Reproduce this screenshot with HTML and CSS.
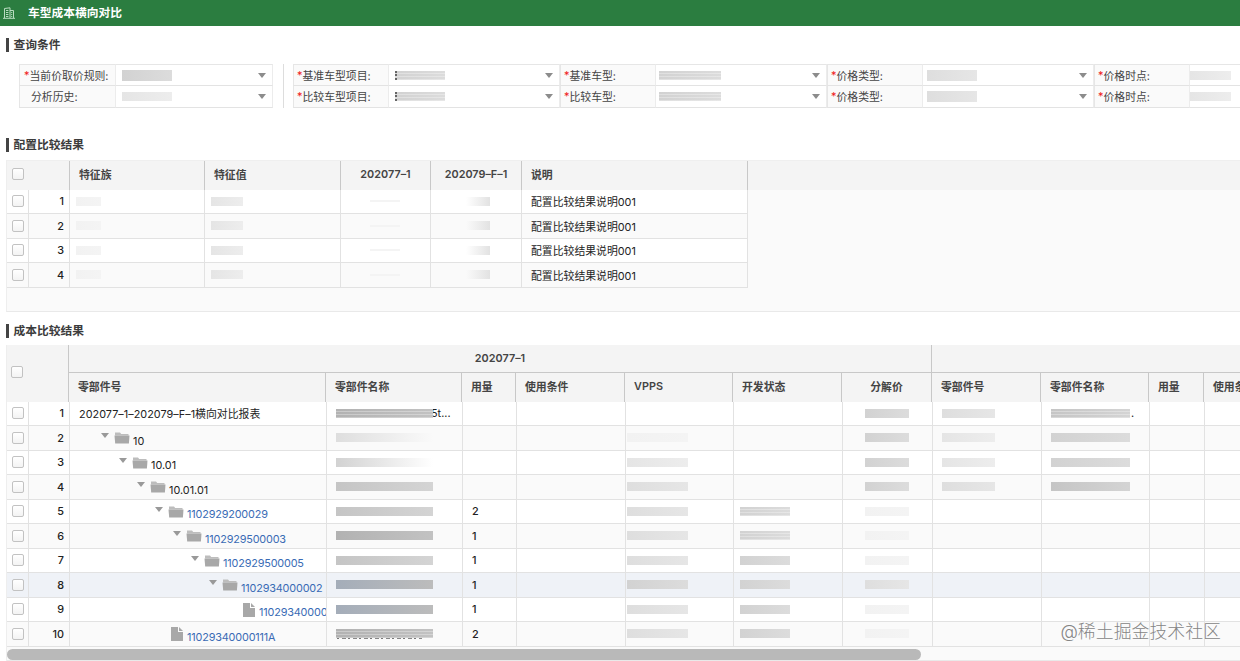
FILE: index.html
```html
<!DOCTYPE html>
<html lang="zh-CN">
<head>
    <meta charset="UTF-8">
    <title>车型成本横向对比</title>
    <link rel="stylesheet" href="styles.css">
</head>
<body>
    <svg class="sprite" width="0" height="0">
        <symbol id="folder" viewBox="0 0 15 12">
            <path d="M.5 3V.6h5L6.7 2H14v1.6H.5z" fill="#bdbdbd"/>
            <path d="M0 3.6h15L14.4 11.6H.7z" fill="#a8a8a8"/>
        </symbol>
        <symbol id="file" viewBox="0 0 12 14">
            <path d="M0 0h7v5h5v9H0z" fill="#a8a8a8"/>
            <path d="M8 0l4 4H8z" fill="#a8a8a8"/>
        </symbol>
    </svg>

    <header class="topbar">
        <svg class="logo" viewBox="0 0 12 12" fill="none" stroke="#b9dcc1" stroke-width="1">
            <path d="M1.5 11V1.5L7 .8V11M7 3.5h3.5V11M0 11.3h12M3 3.5h2.4M3 5.5h2.4M3 7.5h2.4M3 9.5h2.4M8.7 5v1M8.7 7v1M8.7 9v1"/>
        </svg>
        <h1>车型成本横向对比</h1>
    </header>

    <main>
        <h2>查询条件</h2>
        <div class="query">
            <div class="form base">
                <div class="label"><i>*</i>当前价取价规则:</div><div class="select"><span class="mask w50 t4 tall"></span></div>
                <div class="label plain">分析历史:</div><div class="select"><span class="mask w50 t2"></span></div>
            </div>
            <div class="form compare">
                <div class="label"><i>*</i>基准车型项目:</div><div class="select"><span class="mask w50 t4 cut stripes"></span></div>
                <div class="label"><i>*</i>基准车型:</div><div class="select near"><span class="mask w62 t4 stripes"></span></div>
                <div class="label"><i>*</i>价格类型:</div><div class="select type"><span class="mask w50 t3 tall"></span></div>
                <div class="label"><i>*</i>价格时点:</div><div class="select edge"><span class="mask w41 t2"></span></div>
                <div class="label"><i>*</i>比较车型项目:</div><div class="select"><span class="mask w50 t4 cut stripes"></span></div>
                <div class="label"><i>*</i>比较车型:</div><div class="select near"><span class="mask w62 t4 stripes"></span></div>
                <div class="label"><i>*</i>价格类型:</div><div class="select type"><span class="mask w50 t3 tall"></span></div>
                <div class="label"><i>*</i>价格时点:</div><div class="select edge"><span class="mask w41 t2"></span></div>
            </div>
        </div>

        <h2>配置比较结果</h2>
        <div class="grid config">
            <div class="head row">
                <div class="pick"><b class="check"></b></div>
                <div>特征族</div><div>特征值</div><div class="center">202077–1</div><div class="center">202079–F–1</div><div>说明</div>
            </div>
            <div class="row">
                <div class="pick"><b class="check"></b></div><div class="num">1</div>
                <div><span class="mask w25 t1"></span></div><div><span class="mask w32 t2"></span></div>
                <div class="mid"><span class="mask line"></span></div><div class="mid"><span class="mask fade"></span></div><div>配置比较结果说明001</div>
            </div>
            <div class="row">
                <div class="pick"><b class="check"></b></div><div class="num">2</div>
                <div><span class="mask w25 t1"></span></div><div><span class="mask w32 t2"></span></div>
                <div class="mid"><span class="mask line"></span></div><div class="mid"><span class="mask fade"></span></div><div>配置比较结果说明001</div>
            </div>
            <div class="row">
                <div class="pick"><b class="check"></b></div><div class="num">3</div>
                <div><span class="mask w25 t1"></span></div><div><span class="mask w32 t2"></span></div>
                <div class="mid"><span class="mask line"></span></div><div class="mid"><span class="mask fade"></span></div><div>配置比较结果说明001</div>
            </div>
            <div class="row">
                <div class="pick"><b class="check"></b></div><div class="num">4</div>
                <div><span class="mask w25 t1"></span></div><div><span class="mask w32 t2"></span></div>
                <div class="mid"><span class="mask line"></span></div><div class="mid"><span class="mask fade"></span></div><div>配置比较结果说明001</div>
            </div>
        </div>

        <h2>成本比较结果</h2>
        <div class="grid cost">
            <div class="head row">
                <div class="pick"><b class="check"></b></div>
                <div class="group">202077–1</div><div class="group"></div>
                <div>零部件号</div><div>零部件名称</div><div>用量</div><div>使用条件</div><div>VPPS</div><div>开发状态</div><div class="center">分解价</div>
                <div>零部件号</div><div>零部件名称</div><div>用量</div><div>使用条件</div>
            </div>
            <div class="row">
                <div class="pick"><b class="check"></b></div><div class="num">1</div>
                <div class="report">202077–1–202079–F–1横向对比报表</div>
                <div><span class="mask w96 t6 stripes"></span><span class="tail">5t...</span></div><div></div><div></div><div></div><div></div>
                <div class="price"><span class="mask w44 t4"></span></div>
                <div><span class="mask w52 t3"></span></div><div><span class="mask w78 t5 stripes"></span><span class="dot">.</span></div><div></div><div></div>
            </div>
            <div class="row">
                <div class="pick"><b class="check"></b></div><div class="num">2</div>
                <div class="tree lv0"><b class="arrow"></b><svg class="folder"><use href="#folder"/></svg>10</div>
                <div><span class="mask w96 t3 out"></span></div><div></div><div></div>
                <div class="vpps"><span class="mask w61 t1"></span></div><div></div>
                <div class="price"><span class="mask w44 t4"></span></div>
                <div><span class="mask w52 t2"></span></div><div><span class="mask w78 t4"></span></div><div></div><div></div>
            </div>
            <div class="row">
                <div class="pick"><b class="check"></b></div><div class="num">3</div>
                <div class="tree lv1"><b class="arrow"></b><svg class="folder"><use href="#folder"/></svg>10.01</div>
                <div><span class="mask w96 t4 out"></span></div><div></div><div></div>
                <div class="vpps"><span class="mask w61 t2"></span></div><div></div>
                <div class="price"><span class="mask w44 t4"></span></div>
                <div><span class="mask w52 t2"></span></div><div><span class="mask w78 t4"></span></div><div></div><div></div>
            </div>
            <div class="row">
                <div class="pick"><b class="check"></b></div><div class="num">4</div>
                <div class="tree lv2"><b class="arrow"></b><svg class="folder"><use href="#folder"/></svg>10.01.01</div>
                <div><span class="mask w96 t5"></span></div><div></div><div></div>
                <div class="vpps"><span class="mask w61 t3"></span></div><div></div>
                <div class="price"><span class="mask w44 t4"></span></div>
                <div><span class="mask w52 t3"></span></div><div><span class="mask w78 t5"></span></div><div></div><div></div>
            </div>
            <div class="row">
                <div class="pick"><b class="check"></b></div><div class="num">5</div>
                <div class="tree lv3"><b class="arrow"></b><svg class="folder"><use href="#folder"/></svg><a>1102929200029</a></div>
                <div><span class="mask w96 t5"></span></div><div class="qty">2</div><div></div>
                <div class="vpps"><span class="mask w61 t3"></span></div><div class="state"><span class="mask w50 t4 stripes"></span></div>
                <div class="price"><span class="mask w44 t1"></span></div>
                <div></div><div></div><div></div><div></div>
            </div>
            <div class="row">
                <div class="pick"><b class="check"></b></div><div class="num">6</div>
                <div class="tree lv4"><b class="arrow"></b><svg class="folder"><use href="#folder"/></svg><a>1102929500003</a></div>
                <div><span class="mask w96 t6"></span></div><div class="qty">1</div><div></div>
                <div class="vpps"><span class="mask w61 t3"></span></div><div class="state"><span class="mask w50 t4 stripes"></span></div>
                <div class="price"><span class="mask w44 t1"></span></div>
                <div></div><div></div><div></div><div></div>
            </div>
            <div class="row">
                <div class="pick"><b class="check"></b></div><div class="num">7</div>
                <div class="tree lv5"><b class="arrow"></b><svg class="folder"><use href="#folder"/></svg><a>1102929500005</a></div>
                <div><span class="mask w96 t5"></span></div><div class="qty">1</div><div></div>
                <div class="vpps"><span class="mask w61 t3"></span></div><div class="state"><span class="mask w50 t4"></span></div>
                <div class="price"><span class="mask w44 t1"></span></div>
                <div></div><div></div><div></div><div></div>
            </div>
            <div class="row active">
                <div class="pick"><b class="check"></b></div><div class="num">8</div>
                <div class="tree lv6"><b class="arrow"></b><svg class="folder"><use href="#folder"/></svg><a>1102934000002</a></div>
                <div><span class="mask w96 t6 blue"></span></div><div class="qty">1</div><div></div>
                <div class="vpps"><span class="mask w61 t4"></span></div><div class="state"><span class="mask w50 t4"></span></div>
                <div class="price"><span class="mask w44 t3"></span></div>
                <div></div><div></div><div></div><div></div>
            </div>
            <div class="row">
                <div class="pick"><b class="check"></b></div><div class="num">9</div>
                <div class="tree lv7"><b class="leaf"></b><svg class="file"><use href="#file"/></svg><a>11029340000</a></div>
                <div><span class="mask w96 t6 blue"></span></div><div class="qty">1</div><div></div>
                <div class="vpps"><span class="mask w61 t3"></span></div><div class="state"><span class="mask w50 t4"></span></div>
                <div class="price"><span class="mask w44 t1"></span></div>
                <div></div><div></div><div></div><div></div>
            </div>
            <div class="row">
                <div class="pick"><b class="check"></b></div><div class="num">10</div>
                <div class="tree lv3"><b class="leaf"></b><svg class="file"><use href="#file"/></svg><a>11029340000111A</a></div>
                <div><span class="mask w96 t6 stripes ragged"></span></div><div class="qty">2</div><div></div>
                <div class="vpps"><span class="mask w61 t3"></span></div><div class="state"><span class="mask w50 t4"></span></div>
                <div class="price"><span class="mask w44 t1"></span></div>
                <div></div><div></div><div></div><div></div>
            </div>
            <div class="scroll"><div class="thumb"></div></div>
        </div>
    </main>
    <div class="watermark">@稀土掘金技术社区</div>
</body>
</html>
```
FILE: styles.css
```css
* {
    box-sizing: border-box;
}
body {
    margin: 0;
    height: 661px;
    overflow: hidden;
    background: #fff;
    color: #222;
    font-family: Inter, "Noto Sans CJK SC", sans-serif;
    font-size: 10.85px;
}
.sprite {
    display: block;
    height: 0;
}
.topbar {
    display: flex;
    align-items: center;
    height: 26px;
    padding-left: 3px;
    background: #2b7d40;
}
.logo {
    width: 12px;
    height: 12px;
    margin: -1px 13px 0 0;
}
h1 {
    margin: 0;
    color: #fff;
    font-size: 11.75px;
    line-height: 26px;
}
h2 {
    display: flex;
    align-items: center;
    height: 14px;
    margin: 0 0 0 6px;
    padding-left: 4.5px;
    border-left: 3px solid #444;
    color: #3c3c3c;
    font-size: 11.75px;
    font-weight: 600;
    line-height: 14px;
}
main {
    padding-top: 12px;
}

/* query form */
.query {
    display: flex;
    height: 44px;
    margin: 12px 0 30px 19px;
}
.form {
    display: grid;
    grid-template-rows: 22px 22px;
    flex: none;
}
.base {
    grid-template-columns: 97px 157px;
    margin-right: 10px;
}
.compare {
    grid-template-columns: repeat(4, 96px 171px);
    padding-left: 9px;
    border-left: 1px solid #ddd;
}
.label, .select {
    display: flex;
    align-items: center;
    padding-bottom: 1px;
    border-bottom: 1px solid #e3e3e3;
    border-right: 1px solid #ececec;
}
.base > :nth-child(-n+2),
.compare > :nth-child(-n+8) {
    border-top: 1px solid #e6e6e6;
}
.label {
    padding-left: 4px;
    border-left: 1px solid #e6e6e6;
    background: #fafafa;
    color: #444;
    white-space: nowrap;
}
.compare .label {
    padding-left: 3px;
}
.label.plain {
    padding-left: 11px;
}
.label i {
    color: #f01818;
    font-style: normal;
}
.select {
    padding: 0 6px 0 6px;
    justify-content: space-between;
}
.select.near {
    padding-left: 3px;
}
.select.type {
    padding-left: 4px;
}
.select.edge {
    padding-left: 0;
}
.select::after {
    content: "";
    border: 4px solid transparent;
    border-top: 5px solid #8c8c8c;
    border-bottom: 0;
}

/* grids */
.grid {
    margin-left: 6px;
    border-left: 1px solid #eee;
    background: #fafafa;
    overflow: hidden;
}
.row {
    display: grid;
    height: 24.5px;
}
.row > div {
    display: flex;
    align-items: center;
    min-width: 0;
    padding-left: 9px;
    border-right: 1px solid #e2e2e2;
    border-bottom: 1px solid #e2e2e2;
    overflow: hidden;
    white-space: nowrap;
}
.row:nth-child(even) > div {
    background: #fff;
}
.row.active > div {
    background: #eff2f7;
}
.head.row > div {
    padding-bottom: 1px;
    background: #f4f4f4;
    border-color: #c8c8c8;
    color: #444;
    font-weight: 600;
}
.head.row > .pick {
    padding-left: 4px;
}
.head .center {
    justify-content: center;
    padding-left: 0;
}
.row > .pick {
    padding-left: 5px;
}
.row > .num {
    justify-content: flex-end;
    padding: 0 5px 0 0;
    font-weight: 500;
}
.row > .qty {
    font-weight: 500;
}
.check {
    flex: none;
    width: 12px;
    height: 12px;
    border: 1px solid #c2c2c2;
    border-radius: 2px;
    background: linear-gradient(#fff, #f3f3f3);
}

.config {
    height: 152px;
    margin-top: 8px;
    margin-bottom: 12px;
    border-bottom: 1px solid #e9e9e9;
    border-top: 1px solid #efefef;
}
.config .row {
    grid-template-columns: 22px 41px 135px 136px 90px 91px 226px;
}
.config .head {
    grid-template-columns: 63px 135px 136px 90px 91px 226px;
    height: 28.5px;
    background: #f4f4f4;
}
.config .head > div {
    padding-bottom: 2px;
    border-bottom: 0;
}
.config .head > .pick {
    padding-left: 5px;
}
.config .row:not(.head) > :nth-child(3),
.config .row:not(.head) > :nth-child(4) {
    padding-left: 6px;
}
.config .mid {
    padding-left: 29px;
}

.cost {
    margin-top: 7px;
}
.cost .row {
    grid-template-columns: 22px 41px 257px 136px 54px 109px 108px 109px 90px 109px 108px 55px 109px;
}
.cost .head {
    grid-template-columns: 62px 257px 136px 54px 109px 108px 109px 90px 109px 108px 55px 109px;
    grid-template-rows: 28px 28.5px;
    height: 56.5px;
}
.cost .head > div {
    padding-bottom: 3px;
    border-bottom: 0;
}
.cost .head > .pick {
    grid-row: span 2;
}
.cost .head > .group {
    grid-column: span 7;
    justify-content: center;
    padding: 0 0 1px;
    border-bottom: 1px solid #c8c8c8;
}
.cost .head > .group + .group {
    grid-column: span 4;
}
.cost .report {
    letter-spacing: .03px;
}
.row > .vpps {
    padding-left: 1px;
}
.row > .state {
    padding-left: 6px;
}
.row > .price {
    padding-left: 22px;
}
.tail {
    margin-left: -2px;
}
.dot {
    margin-left: 1px;
}

/* part tree */
.row > .tree {
    padding-left: 31px;
    padding-top: 6px;
}
.row > .lv1 { padding-left: 49px; }
.row > .lv2 { padding-left: 67px; }
.row > .lv3 { padding-left: 85px; }
.row > .lv4 { padding-left: 103px; }
.row > .lv5 { padding-left: 121px; }
.row > .lv6 { padding-left: 139px; }
.row > .lv7 { padding-left: 157px; }
.arrow {
    flex: none;
    margin: -10px 5px 0 0;
    border: 4.5px solid transparent;
    border-top: 5px solid #999;
    border-bottom: 0;
}
.leaf {
    flex: none;
    width: 16px;
}
.folder, .file {
    flex: none;
    width: 16px;
    height: 12px;
    margin: -5px 3px 0 0;
}
.file {
    width: 12px;
    height: 14px;
    margin-right: 4px;
}
.tree a {
    color: #3a6bb5;
    letter-spacing: -.16px;
}

/* hidden values */
.mask {
    flex: none;
    position: relative;
    height: 9px;
    background: linear-gradient(90deg, var(--tone), var(--end, var(--tone)));
}
.tall { height: 11px; }
.w25 { width: 25px; }
.w32 { width: 32px; }
.w41 { width: 41px; }
.w44 { width: 44px; }
.w50 { width: 50px; }
.w52 { width: 53px; }
.w61 { width: 61px; }
.w62 { width: 62px; }
.w78 { width: 79px; }
.w96 { width: 97px; }
.t1 { --tone: #f2f2f2; --end: #f4f4f4; }
.t2 { --tone: #e5e5e5; --end: #ededed; }
.t3 { --tone: #dedede; --end: #e6e6e6; }
.t4 { --tone: #d2d2d2; --end: #dcdcdc; }
.t5 { --tone: #c5c5c5; --end: #d4d4d4; }
.t6 { --tone: #b2b2b2; --end: #c2c2c2; }
.blue { --tone: #a4adb9; --end: #bcbcbc; }
.out { --end: transparent; }
.stripes::before {
    content: "";
    position: absolute;
    inset: 0;
    background: repeating-linear-gradient(transparent 0 2px, rgba(255, 255, 255, .3) 2px 3px);
}
.cut {
    border-left: 2px dotted #666;
}
.line {
    width: 30px;
    height: 2px;
    background: #f4f4f4;
}
.fade {
    width: 30px;
    background: linear-gradient(90deg, transparent 20%, #e2e2e2);
}
.ragged::after {
    content: "";
    position: absolute;
    left: 1px;
    width: 85px;
    top: 9px;
    height: 1px;
    background: repeating-linear-gradient(90deg, #777 0 2px, transparent 2px 5px, #888 5px 9px, transparent 9px 11px);
}

.scroll {
    height: 14px;
    padding-top: 2px;
    border-bottom: 1px solid #e9e9e9;
}
.thumb {
    width: 914px;
    height: 11px;
    border-radius: 6px;
    background: #b9b9b9;
}
.watermark {
    position: absolute;
    right: 19px;
    bottom: 16px;
    color: #858585;
    font-size: 17.9px;
    font-weight: 300;
    line-height: 26px;
    text-shadow: 0 0 2px #fff;
}
```
